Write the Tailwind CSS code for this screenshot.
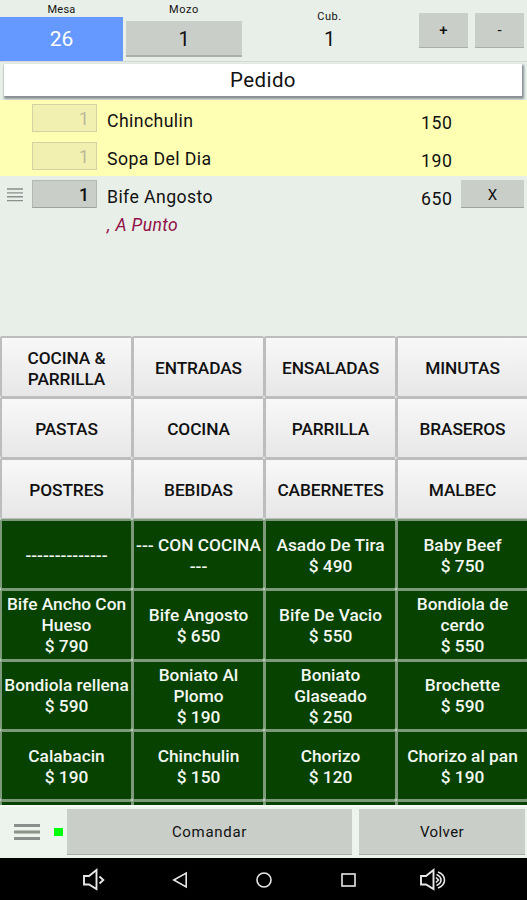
<!DOCTYPE html>
<html lang="es">
<head>
  <meta charset="UTF-8" />
  <title>Pedido – Mesa 26</title>
  <meta name="viewport" content="width=device-width, initial-scale=1.0" />
  <script src="https://cdn.jsdelivr.net/npm/@tailwindcss/browser@4"></script>
</head>
<body class="bg-[#e8efe8] text-[#111] font-['Roboto',sans-serif] w-[527px] h-[900px] overflow-hidden flex flex-col">

  <header class="h-[61px] shrink-0 flex">
    <div class="w-[123px] flex flex-col">
      <span class="h-[17px] leading-[19px] text-[11px] tracking-[0.2px] text-center">Mesa</span>
      <button class="h-[44px] bg-[#6699ff] text-white text-[21px] pt-[2px]">26</button>
    </div>
    <div class="w-[116px] ml-[3px] flex flex-col">
      <span class="h-[21px] leading-[19px] text-[11px] tracking-[0.6px] text-center">Mozo</span>
      <button class="h-[36px] bg-[#c9cec9] border-b-2 border-[#a9aeaa] text-[20px] pt-[2px]">1</button>
    </div>
    <div class="w-[175px] flex flex-col text-center">
      <span class="h-[26px] pt-[9px] leading-[16px] text-[11px] tracking-[0.6px]">Cub.</span>
      <span class="text-[20px] leading-[27px]">1</span>
    </div>
    <div class="flex gap-[7px] pt-[13px] pl-[2px]">
      <button class="w-[49px] h-[35px] bg-[#c9cec9] border-b border-[#a9aeaa] text-[15px] font-medium pt-px">+</button>
      <button class="w-[49px] h-[35px] bg-[#c9cec9] border-b border-[#a9aeaa] text-[15px] pt-px">-</button>
    </div>
  </header>

  <div class="h-[39px] shrink-0 border-t border-[#d3d8d4] pt-[2px] pl-1 pr-[5px]">
    <h1 class="h-[32px] bg-white shadow-[1px_2px_2px_1px_#8b9096] text-center text-[20.5px] leading-[33px] tracking-[0.4px]">Pedido</h1>
  </div>

  <section class="h-[236px] shrink-0 text-[17.7px]">
    <div id="sent"></div>
    <div class="h-[38px] flex pt-[4px]">
      <svg class="w-8 h-7 shrink-0" viewBox="0 0 32 28" stroke="#8a8f8b" stroke-width="1.4">
        <path d="M7 9h16M7 12.900h16M7 16.800h16M7 20.600h16" />
      </svg>
      <button class="w-[65px] h-[28px] bg-[#c9cec9] border border-[#b3b8b4] border-b-[#9da29e] font-medium text-right pr-[7px] leading-[28px]">1</button>
      <span class="w-[292px] pl-[10px] leading-[34px] tracking-[0.4px]">Bife Angosto</span>
      <span class="w-[72px] pl-[32px] leading-[39px] tracking-[0.6px]">650</span>
      <button class="w-[63px] h-[28px] bg-[#c9cec9] border-b border-[#9da29e] text-[15px] leading-[28px] pt-px">X</button>
    </div>
    <p class="pl-[107px] leading-[22px] text-[17.5px] italic tracking-[0.4px] text-[#910f48]">, A Punto</p>
  </section>

  <nav id="categories" class="h-[183px] shrink-0 w-[528px] grid grid-cols-4 grid-rows-3 text-[17.3px] leading-[21px] font-medium tracking-[-0.1px]"></nav>

  <section class="h-[286px] shrink-0 overflow-hidden bg-[#dfe9de]">
    <div id="dishes" class="w-[528px] grid grid-cols-4 text-[#f4f8f3] text-[17.3px] leading-[21px] font-medium"></div>
  </section>

  <footer class="h-[53px] shrink-0 bg-[#edf3ed] flex border-t-2 border-[#f7faf7]">
    <svg class="w-[54px] h-[50px] shrink-0" viewBox="0 0 54 50" stroke="#8b908c" stroke-width="3">
      <path d="M14 18.500h26M14 25h26M14 31.500h26" />
    </svg>
    <span class="w-[9px] h-[8px] mt-[21px] bg-[#00ff0c]"></span>
    <button class="ml-[4px] mt-[2px] w-[285px] h-[46px] bg-[#c9cec9] border-b border-[#a9aeaa] text-[15px] tracking-[0.7px] pt-[2px]">Comandar</button>
    <button class="ml-[7px] mt-[2px] w-[166px] h-[46px] bg-[#c9cec9] border-b border-[#a9aeaa] text-[15px] tracking-[0.4px] pt-[2px]">Volver</button>
  </footer>

  <!-- Barra del sistema -->
  <div class="h-[42px] shrink-0 bg-black flex">
    <svg width="527" height="42" viewBox="0 858 527 42" fill="none" stroke="#e8e8e8" stroke-width="1.6">
      <path d="M84 876h5l7.500-6v19L89 884.500h-5z" stroke-width="1.9" />
      <path d="M99.500 876.500l3.800 3.500-3.800 3.500" stroke-width="1.900" />
      <path d="M173.800 880l12.400-7v14z" />
      <circle cx="264" cy="880" r="7" />
      <rect x="342" y="874" width="13" height="12" />
      <path d="M421 876h5l7.500-6v19L426 884.500h-5z" stroke-width="1.900" />
      <path d="M436 877.500l2.500 2.500-2.500 2.500" />
      <path d="M436.500 874.500q4.500 2 4.500 5.500t-4.500 5.500M438 872q6.500 2.500 6.500 8t-6.500 8" />
    </svg>
  </div>

<script>
  const sent = [["Chinchulin", 150], ["Sopa Del Dia", 190]];

  const categories = [
    "COCINA & PARRILLA", "ENTRADAS", "ENSALADAS", "MINUTAS",
    "PASTAS", "COCINA", "PARRILLA", "BRASEROS",
    "POSTRES", "BEBIDAS", "CABERNETES", "MALBEC"
  ];

  const dishes = [
    ["--------------"], ["--- CON COCINA<br>---"], ["Asado De Tira", 490], ["Baby Beef", 750],
    ["Bife Ancho Con<br>Hueso", 790], ["Bife Angosto", 650], ["Bife De Vacio", 550], ["Bondiola de<br>cerdo", 550],
    ["Bondiola rellena", 590], ["Boniato Al<br>Plomo", 190], ["Boniato<br>Glaseado", 250], ["Brochette", 590],
    ["Calabacin", 190], ["Chinchulin", 150], ["Chorizo", 120], ["Chorizo al pan", 190]
  ];

  document.getElementById("sent").innerHTML = sent.map(([name, price]) => `
    <div class="h-[38px] bg-[#ffffb3] flex pt-[4px] pl-8">
      <button class="w-[65px] h-[28px] bg-[#f1f0b0] border border-[#d3d2a4] text-[#b9b899] text-right pr-[7px] leading-[28px]">1</button>
      <span class="w-[292px] pl-[10px] leading-[34px] tracking-[0.4px]">${name}</span>
      <span class="pl-[32px] leading-[39px] tracking-[0.6px]">${price}</span>
    </div>`).join("");

  document.getElementById("categories").innerHTML = categories.map((name) => `
    <button class="border border-t-2 border-l-2 border-[#bdbdbd] rounded-[2px] bg-linear-to-b from-[#f8f8f8] to-[#e7e7e7] px-2.5 pt-[3px]">${name.replace("&", "&amp;<br>")}</button>`).join("");

  const cell = "border border-t-2 border-l-2 border-[#7c9a7a] rounded-[2px] bg-[#084200] whitespace-nowrap flex flex-col items-center justify-center text-center";
  document.getElementById("dishes").innerHTML = dishes.map(([name, price]) => `
    <button class="h-[70.3px] pt-[2px] ${cell}"><span>${name}</span>${price ? `<span>$ ${price}</span>` : ""}</button>`).join("")
    + `<div class="h-[70px] ${cell}"></div>`.repeat(4);
</script>

</body>
</html>
